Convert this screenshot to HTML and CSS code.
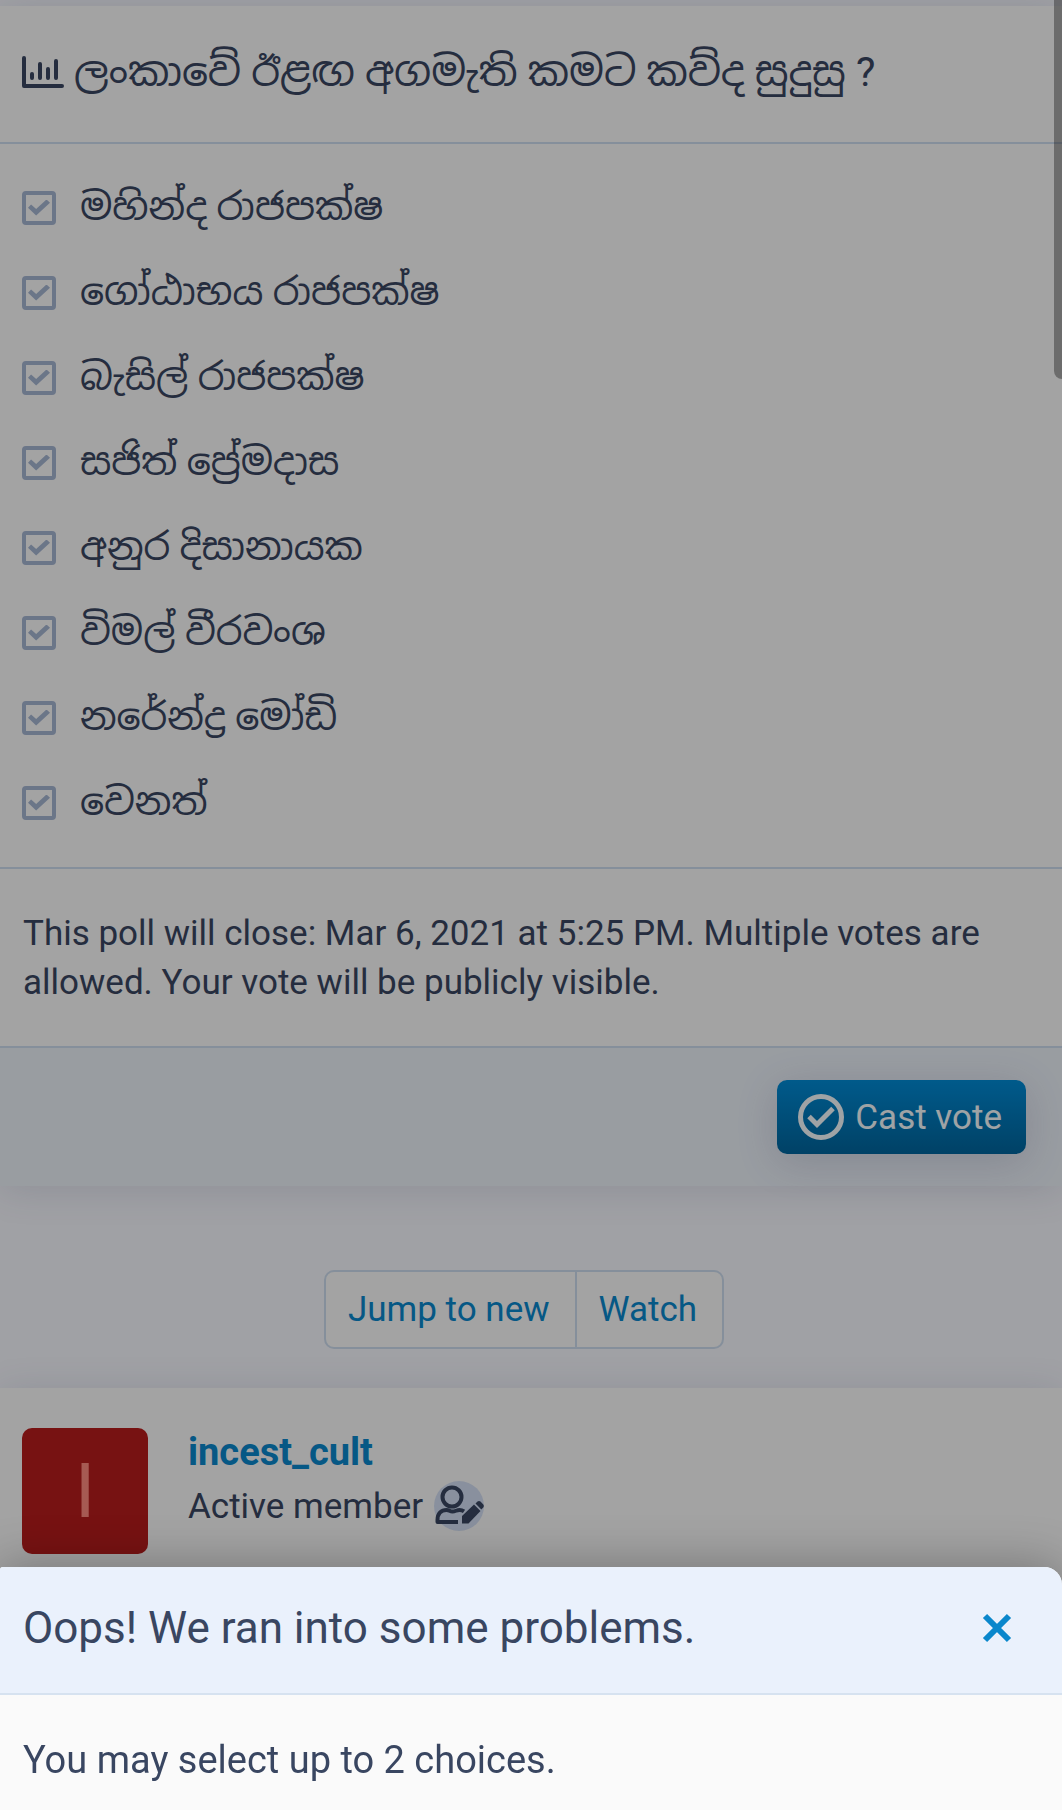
FILE: index.html
```html
<!DOCTYPE html>
<html lang="si">
<head>
    <meta charset="utf-8">
    <meta name="viewport" content="width=device-width, initial-scale=1">
    <title>Poll</title>
    <link rel="stylesheet" href="styles.css">
</head>
<body>
    <main class="page">
        <form class="poll">
            <h2 class="poll-title">
                <svg class="poll-icon" viewBox="0 0 42 32" fill="none" stroke="currentColor" stroke-linecap="round" stroke-linejoin="round">
                    <path stroke-width="4" d="M2 2v28h38"/>
                    <path stroke-width="4" d="M10 18v4M18 8v14M26 13v9M34 5v17"/>
                </svg>
                <span>ලංකාවේ ඊළඟ අගමැති කමට කව්ද සුදුසු ?</span>
            </h2>

            <ul class="poll-options">
                <li><label class="option"><input type="checkbox" checked> <span>මහින්ද රාජපක්ෂ</span></label></li>
                <li><label class="option"><input type="checkbox" checked> <span>ගෝඨාභය රාජපක්ෂ</span></label></li>
                <li><label class="option"><input type="checkbox" checked> <span>බැසිල් රාජපක්ෂ</span></label></li>
                <li><label class="option"><input type="checkbox" checked> <span>සජිත් ප්‍රේමදාස</span></label></li>
                <li><label class="option"><input type="checkbox" checked> <span>අනුර දිසානායක</span></label></li>
                <li><label class="option"><input type="checkbox" checked> <span>විමල් වීරවංශ</span></label></li>
                <li><label class="option"><input type="checkbox" checked> <span>නරේන්ද්‍ර මෝඩි</span></label></li>
                <li><label class="option"><input type="checkbox" checked> <span>වෙනත්</span></label></li>
            </ul>

            <p class="poll-note">This poll will close: Mar 6, 2021 at 5:25 PM. Multiple votes are allowed. Your vote will be publicly visible.</p>

            <div class="poll-footer">
                <button type="button" class="vote-button">
                    <svg class="vote-icon" viewBox="0 0 46 46" fill="none" stroke="currentColor" stroke-width="5">
                        <circle cx="23" cy="23" r="20.500"/>
                        <path d="M11 22.500l8 8 16-16"/>
                    </svg>
                    Cast vote
                </button>
            </div>
        </form>

        <nav class="thread-actions">
            <div class="button-group">
                <a href="#new">Jump to new</a>
                <a href="#watch">Watch</a>
            </div>
        </nav>

        <article class="post">
            <a href="#member" class="avatar">I</a>
            <div class="member">
                <a href="#member" class="member-name">incest_cult</a>
                <div class="member-title">
                    Active member
                    <span class="member-badge">
                        <svg viewBox="0 0 50 50" fill="none" stroke="currentColor" stroke-width="4" stroke-linecap="butt" stroke-linejoin="round">
                            <circle cx="18" cy="16" r="9.5"/>
                            <path d="M24 41H3.500V39c0-7 4-10 9-10 3 0 3 1.500 6 1.500s4-1.500 7-1.500c2 0 3 .3 4.500 1.300"/>
                            <path fill="currentColor" stroke="none" d="M28 42.500v-7.500l12-11.500 6.500 6.500-12 12.500zM41.500 22.500l2-2q1.500-1 3 0l2.800 3q1 1.500 0 3l-2 2z"/>
                        </svg>
                    </span>
                </div>
            </div>
        </article>
    </main>

    <div class="scroll-thumb"></div>
    <div class="overlay"></div>

    <section class="dialog" role="dialog" aria-labelledby="dialog-title">
        <header class="dialog-header">
            <h3 id="dialog-title">Oops! We ran into some problems.</h3>
            <button type="button" class="dialog-close" aria-label="Close">
                <svg viewBox="0 0 30 30" fill="none" stroke="currentColor" stroke-width="6">
                    <path d="M3 3l24 24M27 3L3 27"/>
                </svg>
            </button>
        </header>
        <p class="dialog-text">You may select up to 2 choices.</p>
    </section>

    <script>
        document.querySelector(".dialog-close").addEventListener("click", function() {
            // Hide the message and the dark layer behind it
            document.querySelector(".dialog").style.display = "none";
            document.querySelector(".overlay").style.display = "none";
        });
    </script>
</body>
</html>
```
FILE: styles.css
```css
* {
    box-sizing: border-box;
}

body {
    margin: 0;
    height: 100vh;
    overflow: hidden;
    background: #f6f7fd;
    color: #394661;
    font-family: Roboto, "Noto Sans Sinhala", "Noto Sans", sans-serif;
    font-size: 35px;
    line-height: 49px;
}

a {
    color: #0a87cc;
    text-decoration: none;
}

svg {
    display: block;
}

.page {
    padding-top: 6px;
}

/* Poll */
.poll {
    background: #fafafa;
    box-shadow: 0 4px 36px rgba(60, 70, 110, 0.14);
}

.poll-title {
    display: flex;
    align-items: center;
    gap: 10px;
    margin: 0;
    padding: 38px 22px 42px;
    border-bottom: 2px solid #cddcee;
    font-size: 41px;
    font-weight: 400;
    line-height: 56px;
}

.poll-icon {
    width: 42px;
    height: 32px;
}

.poll-options {
    display: flex;
    flex-direction: column;
    gap: 28px;
    margin: 0;
    padding: 35px 22px 36px;
    list-style: none;
    font-size: 38px;
    line-height: 57px;
}

.option {
    display: flex;
    align-items: center;
    gap: 24px;
}

.option input {
    appearance: none;
    display: grid;
    place-items: center;
    width: 34px;
    height: 34px;
    margin: 0;
    border: 4px solid #a5b5d2;
    border-radius: 4px;
}

.option input:checked::before {
    content: "";
    width: 22px;
    height: 16px;
    background: #a5b5d2;
    clip-path: polygon(0 52%, 14% 32%, 37% 60%, 84% 0, 100% 20%, 37% 100%);
}

.poll-note {
    margin: 0;
    padding: 40px 23px 39px;
    border-top: 2px solid #cddcee;
}

.poll-footer {
    display: flex;
    justify-content: flex-end;
    padding: 32px 36px 32px 23px;
    border-top: 2px solid #cddcee;
    background: #ebf1f8;
}

.vote-button {
    display: flex;
    align-items: center;
    gap: 11px;
    height: 74px;
    padding: 0 24px 0 21px;
    border: 0;
    border-radius: 10px;
    background: linear-gradient(#008bd6, #00659d);
    box-shadow: 0 8px 40px rgba(60, 60, 120, 0.18);
    color: #f5fafd;
    font: inherit;
}

.vote-icon {
    width: 46px;
    height: 46px;
}

/* Thread buttons */
.thread-actions {
    display: flex;
    justify-content: center;
    padding: 84px 14px 39px 0;
}

.button-group {
    display: flex;
    border: 2px solid #cddcee;
    border-radius: 10px;
    background: #fafafa;
}

.button-group a {
    padding: 13px 25px 13px 22px;
}

.button-group a + a {
    border-left: 2px solid #cddcee;
}

/* Post */
.post {
    display: flex;
    gap: 40px;
    min-height: 480px;
    padding: 40px 22px;
    background: #fafafa;
    box-shadow: 0 4px 36px rgba(60, 70, 110, 0.14);
}

.avatar {
    display: grid;
    place-items: center;
    width: 126px;
    height: 126px;
    border-radius: 10px;
    background: #b71c1c;
    color: #ff8a80;
    font-size: 76px;
}

.member {
    display: flex;
    flex-direction: column;
    gap: 4px;
}

.member-name {
    font-size: 38px;
    font-weight: 700;
}

.member-title {
    display: flex;
    align-items: center;
    gap: 11px;
}

.member-badge {
    width: 50px;
    height: 50px;
    border-radius: 50%;
    background: #d3def3;
}

/* Scroll position marker */
.scroll-thumb {
    position: absolute;
    top: 0;
    right: 0;
    width: 8px;
    height: 379px;
    border-radius: 0 0 0 8px;
    background: rgba(0, 0, 0, 0.33);
}

.overlay {
    position: fixed;
    inset: 0;
    background: rgba(0, 0, 0, 0.35);
}

/* Message at the bottom of the window */
.dialog {
    position: fixed;
    right: 0;
    bottom: 0;
    left: 0;
    overflow: hidden;
    border-radius: 3px 18px 0 0;
    background: #fafafa;
    box-shadow: 0 0 50px rgba(0, 0, 0, 0.3);
}

.dialog-header {
    display: flex;
    align-items: center;
    justify-content: space-between;
    padding: 30px 50px 34px 23px;
    border-bottom: 2px solid #d6e2f0;
    background: #eaf1fc;
}

.dialog-header h3 {
    margin: 0;
    font-size: 44px;
    font-weight: 400;
    line-height: 62px;
}

.dialog-close {
    width: 30px;
    height: 30px;
    padding: 0;
    border: 0;
    background: none;
    color: #0a87cc;
}

.dialog-text {
    margin: 0;
    padding: 38px 23px 23px;
    font-size: 38px;
    line-height: 54px;
}
```
